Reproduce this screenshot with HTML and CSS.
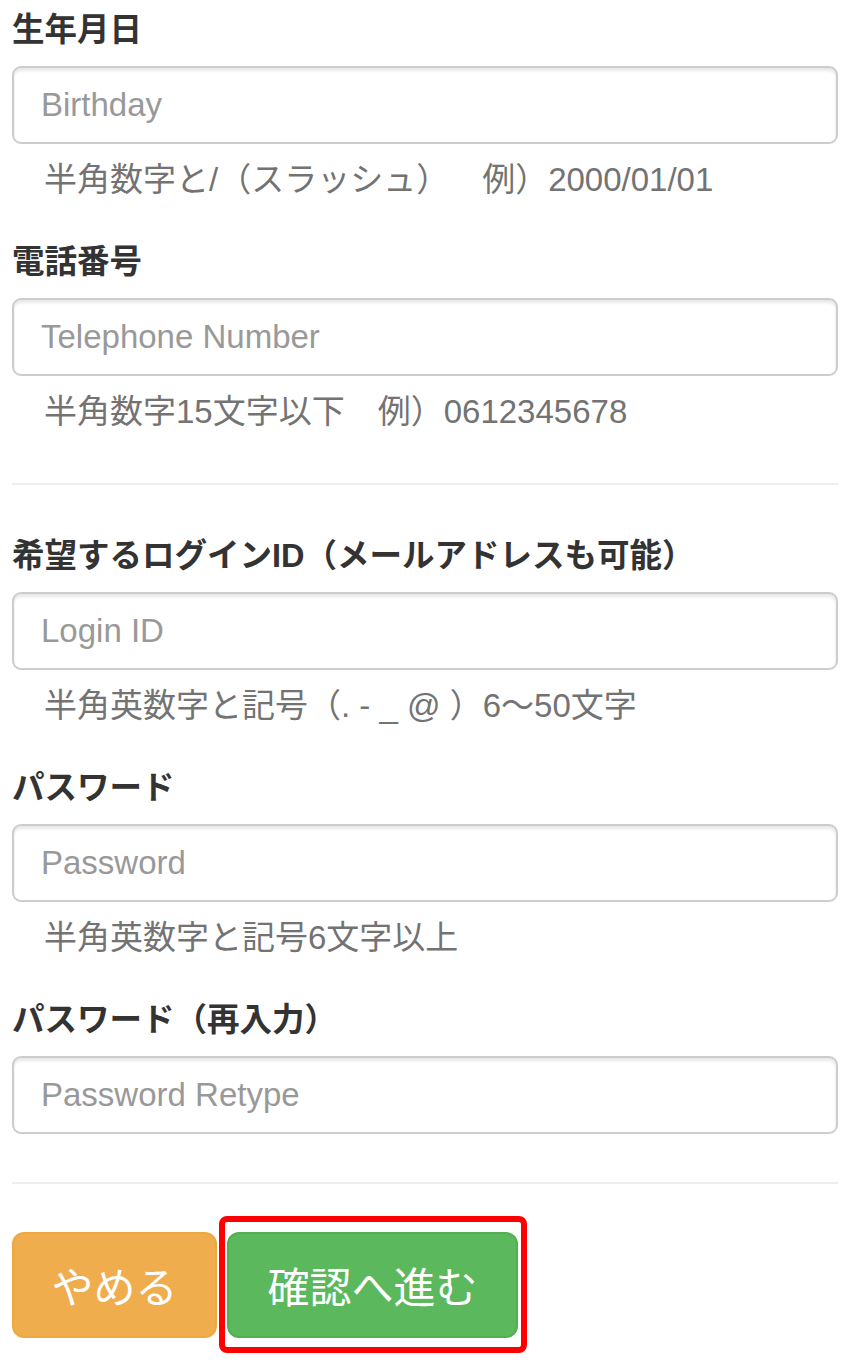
FILE: index.html
```html
<!DOCTYPE html>
<html lang="ja">
<head>
<meta charset="utf-8">
<title>登録フォーム</title>
<link rel="stylesheet" href="styles.css">
</head>
<body>
<form class="form">
  <div class="group">
    <label class="label">生年月日</label>
    <input class="field" type="text" placeholder="Birthday">
    <p class="help">半角数字と/（スラッシュ）　&#8194;例）2000/01/01</p>
  </div>
  <div class="group">
    <label class="label">電話番号</label>
    <input class="field" type="text" placeholder="Telephone Number">
    <p class="help">半角数字15文字以下　例）0612345678</p>
  </div>
  <hr class="rule">
  <div class="group">
    <label class="label">希望するログインID（メールアドレスも可能）</label>
    <input class="field" type="text" placeholder="Login ID">
    <p class="help">半角英数字と記号（. - _ @ ）6〜50文字</p>
  </div>
  <div class="group">
    <label class="label">パスワード</label>
    <input class="field" type="password" placeholder="Password">
    <p class="help">半角英数字と記号6文字以上</p>
  </div>
  <div class="group">
    <label class="label">パスワード（再入力）</label>
    <input class="field" type="password" placeholder="Password Retype">
  </div>
  <hr class="rule">
  <div class="actions">
    <button type="button" class="btn btn-cancel">やめる</button>
    <span class="highlight">
      <button type="button" class="btn btn-next">確認へ進む</button>
    </span>
  </div>
</form>
</body>
</html>
```
FILE: styles.css
```css
html, body {
  margin: 0;
  padding: 0;
  background: #ffffff;
}

body {
  font-family: "Liberation Sans", "Noto Sans CJK JP", sans-serif;
  color: #333333;
}

.form {
  padding: 7px 12px 29px;
}

.group + .group {
  margin-top: 36px;
}

.label {
  display: block;
  font-size: 32.5px;
  line-height: 46px;
  font-weight: bold;
  color: #333333;
  margin: 0 0 13px;
}

.field {
  display: block;
  box-sizing: border-box;
  width: 100%;
  height: 78px;
  margin: 0;
  padding: 0 27px;
  border: 2px solid #cccccc;
  border-radius: 9px;
  background: #ffffff;
  box-shadow: inset 0 3px 3px rgba(0, 0, 0, 0.09);
  font-family: "Liberation Sans", "Noto Sans CJK JP", sans-serif;
  font-size: 33px;
  color: #555555;
  outline: none;
}

.field::placeholder {
  color: #999999;
  opacity: 1;
}

.help {
  margin: 13px 0 0;
  padding-left: 32px;
  font-size: 33px;
  line-height: 46px;
  color: #737373;
  white-space: pre;
}

.rule {
  height: 2px;
  margin: 48px 0;
  border: 0;
  background: #eeeeee;
}

.actions {
  display: flex;
  align-items: flex-start;
  gap: 10px;
}

.btn {
  box-sizing: border-box;
  height: 106px;
  margin: 0;
  padding: 0;
  border: 2px solid transparent;
  border-radius: 12px;
  font-family: "Noto Sans CJK JP", sans-serif;
  font-size: 42px;
  font-weight: normal;
  color: #ffffff;
  line-height: 1;
}

.btn-cancel {
  width: 205px;
  background: #f0ad4e;
  border-color: #eea83f;
}

.btn-next {
  width: 291px;
  background: #5cb85c;
  border-color: #52b052;
}

.highlight {
  position: relative;
  display: flex;
}

.highlight::after {
  content: "";
  position: absolute;
  top: -16px;
  left: -8px;
  right: -9px;
  bottom: -15px;
  border: 6px solid #ff0000;
  border-radius: 8px;
  pointer-events: none;
}
```
